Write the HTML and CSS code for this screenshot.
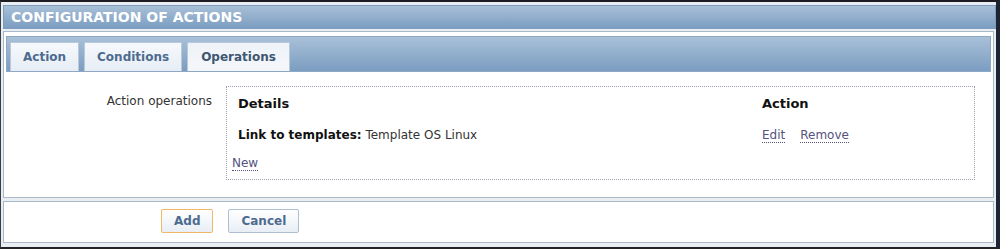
FILE: index.html
```html
<!DOCTYPE html>
<html>
<head>
    <meta charset="utf-8">
    <title>Configuration of actions</title>
    <link rel="stylesheet" href="styles.css">
</head>
<body>
    <div class="frame">
        <div class="header">CONFIGURATION OF ACTIONS</div>
        <div class="panel">
            <div class="tabs">
                <span class="tab">Action</span>
                <span class="tab">Conditions</span>
                <span class="tab active">Operations</span>
            </div>
            <div class="form-row">
                <div class="form-label">Action operations</div>
                <div class="op-box">
                    <table class="op-table">
                        <tr>
                            <th class="col-details">Details</th>
                            <th>Action</th>
                        </tr>
                        <tr>
                            <td><b>Link to templates:</b> Template OS Linux</td>
                            <td><a class="link" href="#">Edit</a><a class="link gap" href="#">Remove</a></td>
                        </tr>
                    </table>
                    <a class="link new" href="#">New</a>
                </div>
            </div>
        </div>
        <div class="footer">
            <button class="btn focused">Add</button>
            <button class="btn">Cancel</button>
        </div>
    </div>
</body>
</html>
```

FILE: styles.css
```css
* {
    margin: 0;
    padding: 0;
    box-sizing: border-box;
}

body {
    font-family: 'DejaVu Sans', Verdana, sans-serif;
    font-size: 12px;
    color: #222;
    background: #1d1f24;
}

.frame {
    width: 1000px;
    height: 249px;
    border-top: 2px solid #1e1e22;
    border-left: 1px solid #3a3d44;
    border-right: 4px solid #1d2532;
    border-bottom: 2px solid #202226;
    background: #e9eef3;
    padding: 3px 0 0 2px;
}

.header {
    height: 24px;
    border: 1px solid #7f9cbc;
    background: linear-gradient(#a9c0d8, #7b9dc1);
    color: #fff;
    font-weight: 700;
    font-size: 14px;
    line-height: 22px;
    padding-left: 7px;
}

.panel {
    margin-top: 2px;
    margin-right: 2px;
    height: 167px;
    border: 1px solid #a9b9ca;
    background: #fff;
    padding: 4px 2px 0 2px;
}

.tabs {
    height: 36px;
    border: 1px solid #8ea8c4;
    background: linear-gradient(#a9c0d8, #7b9dc1);
    display: flex;
    align-items: flex-end;
    gap: 5px;
    padding-left: 3px;
}

.tab {
    height: 29px;
    border: 1px solid #b9c9da;
    border-bottom: none;
    background: linear-gradient(#f6f9fc, #e6edf5);
    color: #4c6b8f;
    font-weight: 700;
    font-size: 12px;
    line-height: 28px;
    padding: 0 12px;
}

.tab.active {
    background: linear-gradient(#eef3f8, #f4f7fa);
    color: #3e5672;
    padding: 0 13px;
}

.form-row {
    display: flex;
    padding-top: 14px;
}

.form-label {
    width: 206px;
    text-align: right;
    padding-top: 8px;
    color: #333;
}

.op-box {
    margin-left: 14px;
    width: 749px;
    height: 94px;
    border: 1px dotted #9aa2ad;
    padding: 9px 6px 0 5px;
}

.op-table {
    border-collapse: collapse;
}

.op-table th {
    text-align: left;
    font-size: 13px;
    color: #111;
    padding: 0 0 14px 6px;
    height: 17px;
}

.op-table td {
    padding: 0 0 0 6px;
    height: 20px;
    color: #333;
}

.op-table td b {
    color: #111;
}

.col-details {
    width: 524px;
}

.link {
    color: #54527e;
    text-decoration: none;
    border-bottom: 1px dotted #54527e;
}

.link.gap {
    margin-left: 15px;
}

.new {
    display: inline-block;
    margin-top: 11px;
    line-height: 14px;
}

.footer {
    margin-top: 3px;
    margin-right: 2px;
    height: 42px;
    border: 1px solid #a9b9ca;
    background: #fff;
    padding: 7px 0 0 157px;
    display: flex;
    gap: 15px;
    align-items: flex-start;
}

.btn {
    height: 24px;
    border: 1px solid #aebfd1;
    border-radius: 2px;
    background: linear-gradient(#ffffff, #e8eef5);
    color: #4c6b8f;
    font-family: 'DejaVu Sans', Verdana, sans-serif;
    font-weight: 700;
    font-size: 12px;
    padding: 0 12px;
}

.btn.focused {
    border-color: #f0b766;
}
```
